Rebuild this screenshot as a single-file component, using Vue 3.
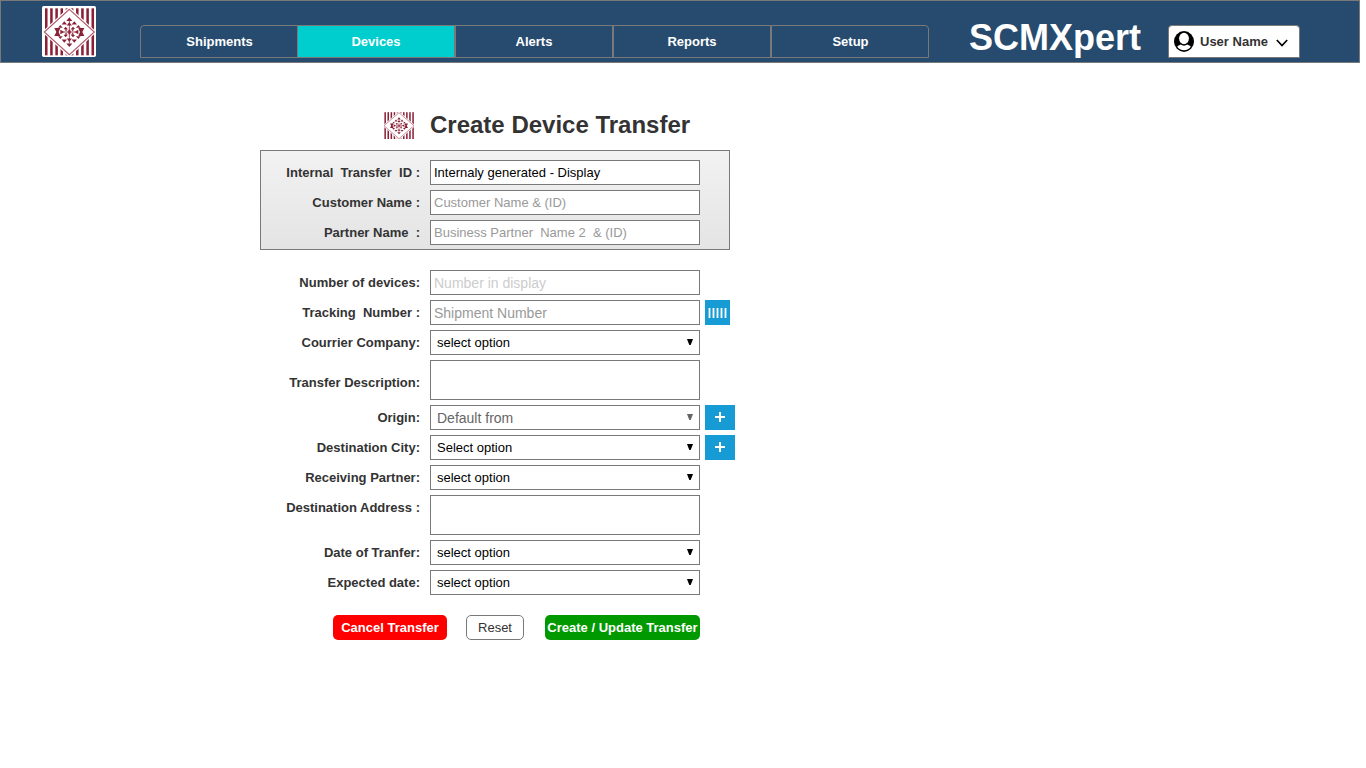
<script setup>
import { h } from 'vue'

const tabs = [
  { name: 'Shipments' },
  { name: 'Devices', active: true },
  { name: 'Alerts' },
  { name: 'Reports' },
  { name: 'Setup' },
]

const idRows = [
  { label: 'Internal  Transfer  ID :', value: 'Internaly generated - Display', tone: 'dark' },
  { label: 'Customer Name :', value: 'Customer Name & (ID)', tone: 'grey' },
  { label: 'Partner Name  :', value: 'Business Partner  Name 2  & (ID)', tone: 'grey' },
]

const rows = [
  { label: 'Number of devices:', value: 'Number in display', tone: 'pale large' },
  { label: 'Tracking  Number :', value: 'Shipment Number', tone: 'grey large', action: 'scan' },
  { label: 'Courrier Company:', value: 'select option', select: true },
  { label: 'Transfer Description:', area: true, low: true },
  { label: 'Origin:', value: 'Default from', select: true, tone: 'mid large', action: 'add' },
  { label: 'Destination City:', value: 'Select option', select: true, action: 'add' },
  { label: 'Receiving Partner:', value: 'select option', select: true },
  { label: 'Destination Address :', area: true },
  { label: 'Date of Tranfer:', value: 'select option', select: true },
  { label: 'Expected date:', value: 'select option', select: true },
]

const stripes = [45, 60.5, 76, 91.5, 107, 122.5, 138, 153.5, 169, 184.5]
const up = [[118, 52, 9], [103, 64, 8], [133, 64, 8], [91, 75, 7], [118, 67, 8], [145, 75, 7], [107, 80, 6], [129, 80, 6], [118, 88, 6], [108, 98, 5], [128, 98, 5]]
const down = [[118, 141, 9], [103, 128, 8], [133, 128, 8], [91, 117, 7], [118, 125, 8], [145, 117, 7], [107, 112, 6], [129, 112, 6], [118, 104, 6], [108, 94, 5], [128, 94, 5]]
const red = '#8a2036'

const Emblem = (props) =>
  h('svg', { viewBox: props.box, preserveAspectRatio: 'none' }, [
    h('rect', { x: 36, y: 18, width: 162, height: 153, rx: 5, fill: '#fff' }),
    ...stripes.map((x) => h('rect', { x, y: 25, width: 7.6, height: 141, fill: red })),
    h('path', { d: 'M118 20 200 96 118 172 36 96Z', fill: '#fff' }),
    h('path', { d: 'M118 28 193 96 118 164 43 96Z', fill: '#fff', stroke: '#b0596b', 'stroke-width': 3.4 }),
    ...up.map(([x, y, s]) => h('path', { d: `M${x} ${y}l${s} ${s * 1.2}h${-2 * s}z`, fill: red })),
    ...down.map(([x, y, s]) => h('path', { d: `M${x} ${y}l${s} ${-s * 1.2}h${-2 * s}z`, fill: red })),
    h('path', { d: 'M73 84h18l-5 12 5 12H73l6-12zM163 84h-18l5 12-5 12h18l-6-12zM91 89l12 7-12 7zM145 89l-12 7 12 7z', fill: red }),
    h('path', { d: 'M100 96h36M118 62v68', stroke: red, 'stroke-width': 2.4 }),
  ])
Emblem.props = ['box']
</script>

<template>
  <div class="page">
    <header class="topbar">
      <Emblem class="logo" box="36 18 162 153" />
      <nav class="tabs">
        <a v-for="t in tabs" :key="t.name" class="tab" :class="{ active: t.active }">{{ t.name }}</a>
      </nav>
      <div class="brand">SCMXpert</div>
      <div class="user">
        <svg class="avatar" viewBox="0 0 20 21">
          <ellipse cx="10" cy="10.5" rx="10" ry="10.4" fill="#000" />
          <ellipse cx="10" cy="7.500" rx="4.900" ry="5.700" fill="#fff" />
          <path d="M3.200 15.800C4 14.600 5.300 14 6.700 13.500 8.700 15 11.300 15 13.300 13.500 14.700 14 16 14.600 16.800 15.800 15.300 18 12.900 19.300 10 19.300S4.700 18 3.200 15.800z" fill="#fff" />
        </svg>
        <span class="username">User Name</span>
        <svg class="chevron" viewBox="0 0 12 8"><path d="M.8 1 6 6.500 11.200 1" fill="none" stroke="#000" stroke-width="1.7" /></svg>
      </div>
    </header>

    <main class="form">
      <div class="heading">
        <Emblem class="mark" box="43 24 150 142" />
        <h1>Create Device Transfer</h1>
      </div>

      <section class="panel">
        <div v-for="r in idRows" :key="r.label" class="row">
          <label>{{ r.label }}</label>
          <div class="field" :class="r.tone">{{ r.value }}</div>
        </div>
      </section>

      <section class="rows">
        <div v-for="r in rows" :key="r.label" class="row">
          <label :class="{ low: r.low }">{{ r.label }}</label>
          <div class="field" :class="[r.tone, { area: r.area, select: r.select }]">
            <span>{{ r.value }}</span>
            <svg v-if="r.select" class="arrow" viewBox="0 0 6 7"><path d="M0 0h6L3.700 6h-1.400z" fill="currentColor" /></svg>
          </div>
          <button v-if="r.action === 'scan'" class="action scan">
            <svg viewBox="0 0 19 10"><path d="M1.500 0v10M5.500 0v10M9.500 0v10M13.500 0v10M17.500 0v10" stroke="#fff" stroke-width="1.8" /></svg>
          </button>
          <button v-if="r.action === 'add'" class="action add">
            <svg viewBox="0 0 10 10"><path d="M5 0v10M0 5h10" stroke="#fff" stroke-width="2" /></svg>
          </button>
        </div>
      </section>

      <div class="buttons">
        <button class="btn cancel">Cancel Transfer</button>
        <button class="btn reset">Reset</button>
        <button class="btn create">Create / Update Transfer</button>
      </div>
    </main>
  </div>
</template>

<style>
body { background: #fff; }
</style>

<style scoped>
.page { width: 1366px; height: 768px; overflow: hidden; font-family: "Liberation Sans", Arial, sans-serif; font-size: 13px; color: #333; }
.page * { box-sizing: border-box; }
.topbar { width: 1360px; height: 63px; display: flex; align-items: flex-start; background: #274b6e; border: 1px solid #797979; }
.logo { width: 54px; height: 51px; margin: 5px 0 0 41px; flex: none; }
.tabs { display: flex; margin: 24px 0 0 44px; flex: none; }
.tab { width: 158px; height: 33px; border: 1px solid #797979; color: #fff; font-weight: bold; text-align: center; line-height: 31px; }
.tab:first-child { border-top-left-radius: 4px; padding-left: 1px; }
.tab:last-child { border-top-right-radius: 4px; padding-left: 1px; }
.tab.active { background: #00cdcd; margin-left: -1px; }
.brand { margin: 16px 0 0 40px; width: 199px; font-size: 36px; line-height: 42px; font-weight: bold; color: #fff; flex: none; }
.user { display: flex; align-items: center; width: 132px; height: 33px; padding-left: 5px; background: #fff; border: 1px solid #797979; border-radius: 4px 4px 0 0; margin-top: 24px; flex: none; }
.avatar { width: 20px; height: 21px; }
.username { font-weight: bold; margin-left: 6px; width: 76px; white-space: nowrap; }
.chevron { width: 12px; height: 8px; margin-top: 2px; }
.form { width: 480px; margin-left: 260px; }
.heading { display: flex; height: 87px; padding: 49px 0 0 124px; }
.mark { width: 30px; height: 27px; }
h1 { margin: -1px 0 0 16px; font-size: 24px; line-height: 28px; font-weight: bold; white-space: nowrap; }
.panel { width: 470px; height: 100px; padding: 9px 0 0; border: 1px solid #797979; background: linear-gradient(#f2f2f2, #e4e4e4); display: flex; flex-direction: column; gap: 5px; }
.panel label { width: 159px; }
.rows { margin-top: 20px; display: flex; flex-direction: column; gap: 5px; }
.row { display: flex; align-items: flex-start; }
label { width: 160px; margin-right: 10px; text-align: right; font-weight: bold; line-height: 25px; white-space: pre; flex: none; }
label.low { padding-top: 10px; }
.field { width: 270px; height: 25px; border: 1px solid #797979; background: #fff; color: #000; padding-left: 3px; line-height: 23px; white-space: pre; flex: none; }
.field.area { height: 40px; }
.field.select { display: flex; align-items: flex-start; justify-content: space-between; padding: 0 6px; }
.large { font-size: 14px; line-height: 25px; }
.grey { color: #999; }
.pale { color: #ccc; }
.mid { color: #666; }
.arrow { width: 6px; height: 7px; margin-top: 8px; }
.action { height: 25px; border: 0; padding: 0; margin-left: 5px; background: #169bd5; display: flex; align-items: center; justify-content: center; }
.scan { width: 25px; }
.scan svg { width: 19px; height: 10px; }
.add { width: 30px; }
.add svg { width: 10px; height: 10px; margin-top: -1px; }
.buttons { display: flex; margin: 20px 0 0 73px; }
.btn { height: 25px; padding: 0; border: 0; border-radius: 5px; font: bold 13px "Liberation Sans", Arial, sans-serif; color: #fff; white-space: nowrap; }
.cancel { width: 114px; background: #f00; }
.reset { width: 58px; margin: 0 21px 0 19px; border: 1px solid #797979; background: #fff; color: #333; font-weight: normal; }
.create { width: 155px; background: #090; }
</style>
